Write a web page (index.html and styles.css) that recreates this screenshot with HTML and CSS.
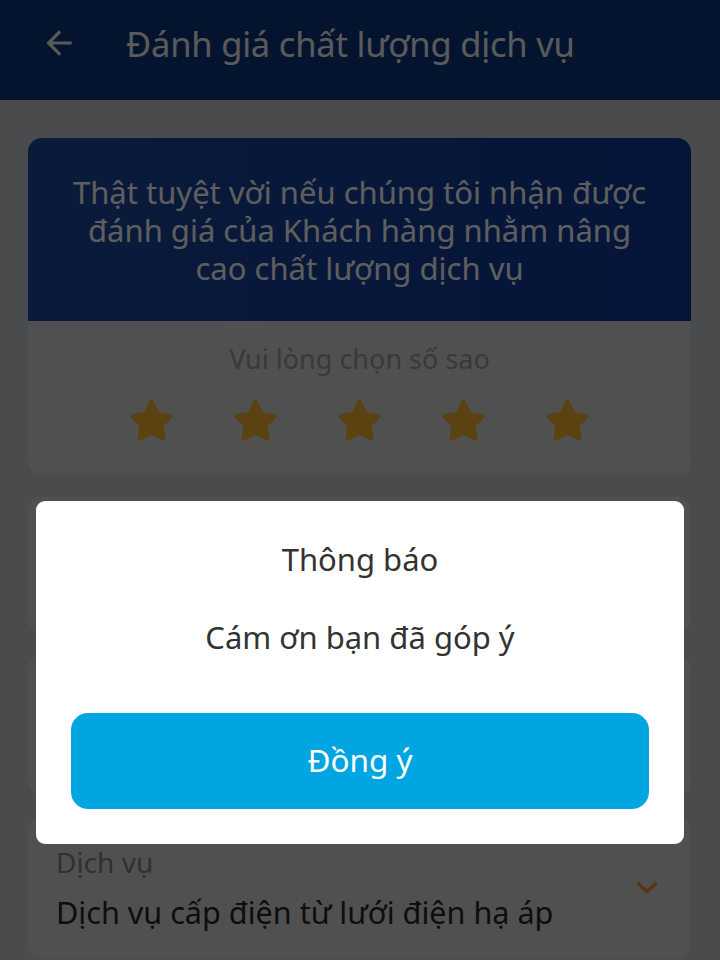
FILE: index.html
```html
<!DOCTYPE html>
<html lang="vi">
<head>
<meta charset="utf-8">
<title>Đánh giá chất lượng dịch vụ</title>
<link rel="stylesheet" href="styles.css">
</head>
<body>
<div class="app">
  <header class="topbar">
    <svg class="back" viewBox="0 0 24 24" width="38" height="38"><path d="M20 11H7.83l5.59-5.59L12 4l-8 8 8 8 1.41-1.41L7.83 13H20v-2z" fill="currentColor"/></svg>
    <h1 class="title">Đánh giá chất lượng dịch vụ</h1>
  </header>
  <main class="content">
    <section class="card rating">
      <div class="banner">Thật tuyệt vời nếu chúng tôi nhận được đánh giá của Khách hàng nhằm nâng cao chất lượng dịch vụ</div>
      <div class="rate-body">
        <div class="rate-label">Vui lòng chọn số sao</div>
        <div class="stars">
          <svg class="star" viewBox="0 0 24 24"><path d="M12 2.6c.4 0 .7.2.9.6l2.3 4.7 5.1.8c.9.1 1.2 1.2.6 1.8l-3.7 3.6.9 5.1c.2.9-.8 1.5-1.5 1.1L12 17.9l-4.6 2.4c-.8.4-1.7-.2-1.5-1.1l.9-5.1-3.7-3.6c-.6-.6-.3-1.7.6-1.8l5.1-.8 2.3-4.7c.2-.4.5-.6.9-.6z"/></svg>
          <svg class="star" viewBox="0 0 24 24"><path d="M12 2.6c.4 0 .7.2.9.6l2.3 4.7 5.1.8c.9.1 1.2 1.2.6 1.8l-3.7 3.6.9 5.1c.2.9-.8 1.5-1.5 1.1L12 17.9l-4.6 2.4c-.8.4-1.7-.2-1.5-1.1l.9-5.1-3.7-3.6c-.6-.6-.3-1.7.6-1.8l5.1-.8 2.3-4.7c.2-.4.5-.6.9-.6z"/></svg>
          <svg class="star" viewBox="0 0 24 24"><path d="M12 2.6c.4 0 .7.2.9.6l2.3 4.7 5.1.8c.9.1 1.2 1.2.6 1.8l-3.7 3.6.9 5.1c.2.9-.8 1.5-1.5 1.1L12 17.9l-4.6 2.4c-.8.4-1.7-.2-1.5-1.1l.9-5.1-3.7-3.6c-.6-.6-.3-1.7.6-1.8l5.1-.8 2.3-4.7c.2-.4.5-.6.9-.6z"/></svg>
          <svg class="star" viewBox="0 0 24 24"><path d="M12 2.6c.4 0 .7.2.9.6l2.3 4.7 5.1.8c.9.1 1.2 1.2.6 1.8l-3.7 3.6.9 5.1c.2.9-.8 1.5-1.5 1.1L12 17.9l-4.6 2.4c-.8.4-1.7-.2-1.5-1.1l.9-5.1-3.7-3.6c-.6-.6-.3-1.7.6-1.8l5.1-.8 2.3-4.7c.2-.4.5-.6.9-.6z"/></svg>
          <svg class="star" viewBox="0 0 24 24"><path d="M12 2.6c.4 0 .7.2.9.6l2.3 4.7 5.1.8c.9.1 1.2 1.2.6 1.8l-3.7 3.6.9 5.1c.2.9-.8 1.5-1.5 1.1L12 17.9l-4.6 2.4c-.8.4-1.7-.2-1.5-1.1l.9-5.1-3.7-3.6c-.6-.6-.3-1.7.6-1.8l5.1-.8 2.3-4.7c.2-.4.5-.6.9-.6z"/></svg>
        </div>
      </div>
    </section>
    <section class="card field f1"></section>
    <section class="card field f2"></section>
    <section class="card field select">
      <div class="select-text">
        <div class="field-label">Dịch vụ</div>
        <div class="field-value">Dịch vụ cấp điện từ lưới điện hạ áp</div>
      </div>
      <svg class="chevron" viewBox="0 0 24 24" width="30" height="30"><path d="M5 8.5l7 6.5 7-6.5" fill="none" stroke="currentColor" stroke-width="2.6" stroke-linecap="round" stroke-linejoin="round"/></svg>
    </section>
  </main>
</div>
<div class="overlay">
  <div class="dialog">
    <div class="dialog-title">Thông báo</div>
    <div class="dialog-msg">Cám ơn bạn đã góp ý</div>
    <button class="dialog-btn">Đồng ý</button>
  </div>
</div>
</body>
</html>
```
FILE: styles.css
```css
* { box-sizing: border-box; }
html, body { margin: 0; padding: 0; }
body {
  width: 720px;
  height: 960px;
  overflow: hidden;
  font-family: "Noto Sans", "Open Sans", sans-serif;
  background: #b9bcc1;
  position: relative;
}
.app { display: flex; flex-direction: column; }
.topbar {
  height: 100px;
  background: #0c3276;
  color: #e2e2e2;
  display: flex;
  align-items: center;
  padding: 0 0 14px 40px;
}
.back { color: #e2e2e2; flex: none; }
.title {
  margin: 0 0 0 48px;
  font-size: 34.5px;
  font-weight: 400;
  letter-spacing: -0.2px;
}
.content {
  padding: 38px 29px 0 28px;
  display: flex;
  flex-direction: column;
  gap: 22px;
}
.card {
  background: #c8c8c8;
  border-radius: 14px;
  overflow: hidden;
}
.banner {
  height: 183px;
  background: linear-gradient(90deg, #1a4392, #0d3590);
  color: #ececec;
  font-size: 31px;
  line-height: 38px;
  text-align: center;
  padding: 35px 38px 0;
}
.rate-body {
  height: 154px;
  display: flex;
  flex-direction: column;
  align-items: center;
  padding-top: 19px;
}
.rate-label {
  font-size: 27px;
  color: #8e8e8e;
  line-height: 38px;
}
.stars {
  display: flex;
  gap: 49px;
  margin-top: 16px;
}
.star { width: 55px; height: 55px; fill: #e3a52b; }
.field.f1 { height: 136px; }
.field.f2 { height: 140px; }
.field.select {
  height: 142px;
  display: flex;
  align-items: flex-start;
  padding: 27px 29px 0 28px;
}
.select-text { flex: 1; }
.field-label { font-size: 28px; color: #787878; line-height: 36px; }
.field-value { font-size: 30.6px; color: #242424; line-height: 44px; margin-top: 10px; }
.chevron { color: #e0852a; flex: none; margin-top: 29px; }
.overlay {
  position: absolute;
  inset: 0;
  background: rgba(0, 0, 0, 0.6);
  display: flex;
  flex-direction: column;
  align-items: center;
  padding-top: 501px;
}
.dialog {
  width: 648px;
  height: 343px;
  background: #fff;
  border-radius: 9px;
  display: flex;
  flex-direction: column;
  align-items: center;
  padding: 36px 35px 0;
}
.dialog-title { font-size: 31px; color: #333; line-height: 44px; }
.dialog-msg { font-size: 31px; color: #333; line-height: 44px; margin-top: 34px; }
.dialog-btn {
  margin-top: 54px;
  width: 578px;
  height: 96px;
  border: none;
  border-radius: 17px;
  background: #00a5e1;
  color: #fff;
  font-family: inherit;
  font-size: 31.5px;
  padding: 0 0 4px;
}
```
